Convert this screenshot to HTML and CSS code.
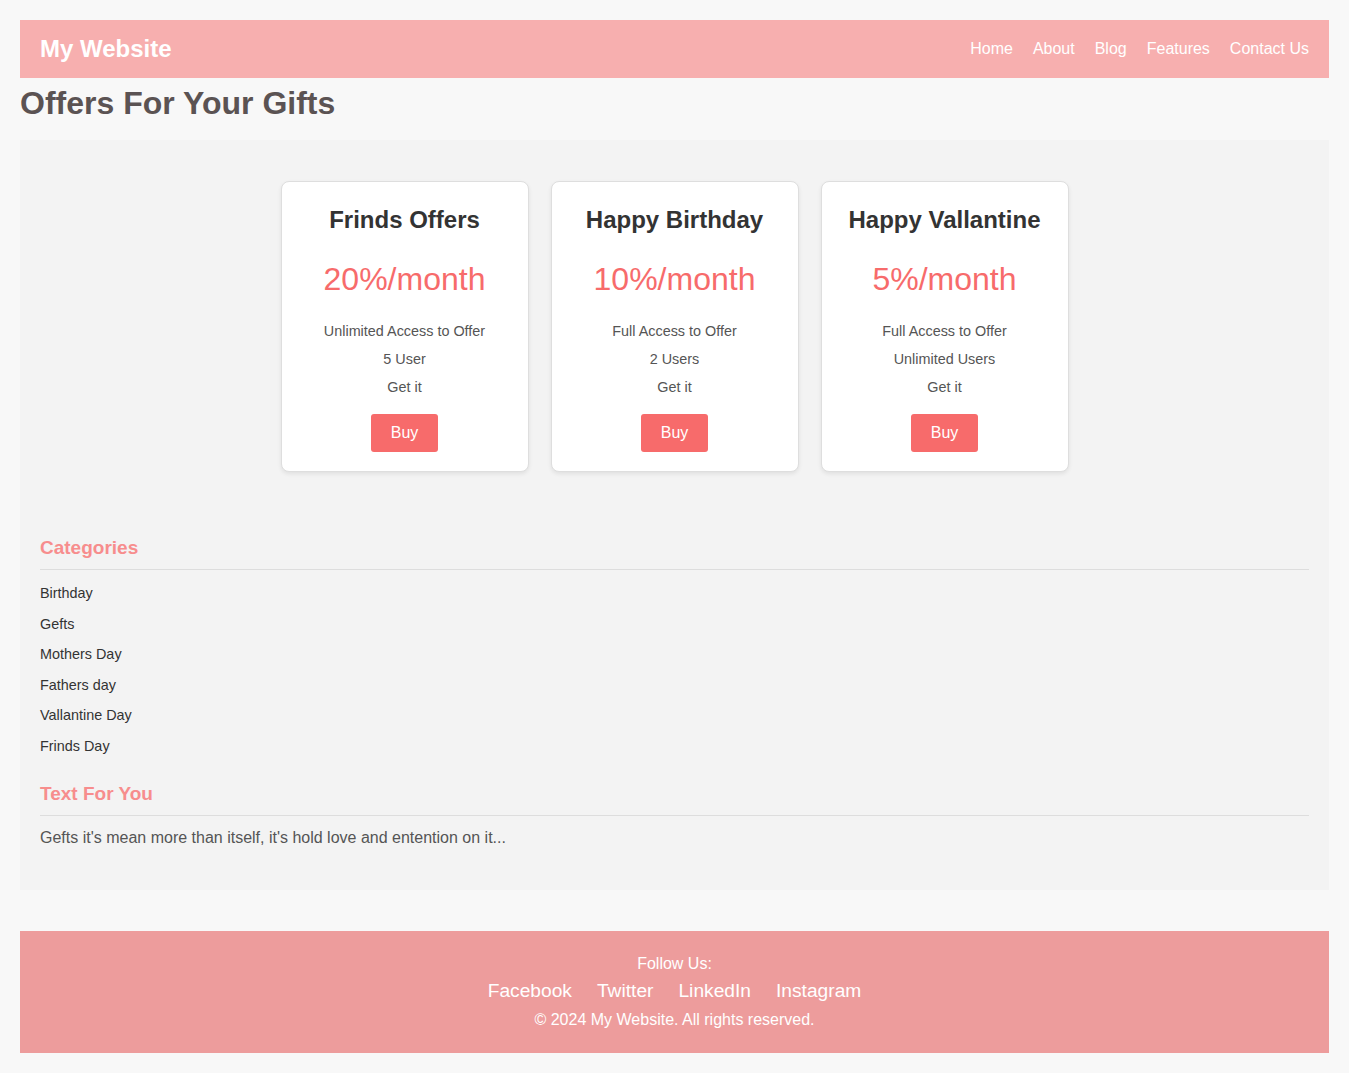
FILE: index.html
```html
<!DOCTYPE html>
<html lang="en">
<head>
<meta charset="utf-8">
<title>My Website</title>
<link rel="stylesheet" href="styles.css">
</head>
<body>
<header class="site-header">
  <div class="logo">My Website</div>
  <nav class="nav">
    <a href="#">Home</a>
    <a href="#">About</a>
    <a href="#">Blog</a>
    <a href="#">Features</a>
    <a href="#">Contact Us</a>
  </nav>
</header>

<h1 class="page-title">Offers For Your Gifts</h1>

<main class="content">
  <div class="cards">
    <div class="card">
      <h3 class="card-title">Frinds Offers</h3>
      <div class="price">20%/month</div>
      <ul class="features">
        <li>Unlimited Access to Offer</li>
        <li>5 User</li>
        <li>Get it</li>
      </ul>
      <button class="buy">Buy</button>
    </div>
    <div class="card">
      <h3 class="card-title">Happy Birthday</h3>
      <div class="price">10%/month</div>
      <ul class="features">
        <li>Full Access to Offer</li>
        <li>2 Users</li>
        <li>Get it</li>
      </ul>
      <button class="buy">Buy</button>
    </div>
    <div class="card">
      <h3 class="card-title">Happy Vallantine</h3>
      <div class="price">5%/month</div>
      <ul class="features">
        <li>Full Access to Offer</li>
        <li>Unlimited Users</li>
        <li>Get it</li>
      </ul>
      <button class="buy">Buy</button>
    </div>
  </div>

  <section class="block categories">
    <h2 class="block-title">Categories</h2>
    <ul class="cat-list">
      <li>Birthday</li>
      <li>Gefts</li>
      <li>Mothers Day</li>
      <li>Fathers day</li>
      <li>Vallantine Day</li>
      <li>Frinds Day</li>
    </ul>
  </section>

  <section class="block text-block">
    <h2 class="block-title">Text For You</h2>
    <p class="text">Gefts it's mean more than itself, it's hold love and entention on it...</p>
  </section>
</main>

<footer class="site-footer">
  <div class="follow">Follow Us:</div>
  <div class="social">
    <a href="#">Facebook</a>
    <a href="#">Twitter</a>
    <a href="#">LinkedIn</a>
    <a href="#">Instagram</a>
  </div>
  <div class="copy">© 2024 My Website. All rights reserved.</div>
</footer>
</body>
</html>
```

FILE: styles.css
```css
* { box-sizing: border-box; }

body {
  margin: 0;
  padding: 20px 20px 21px;
  background: #f8f8f8;
  font-family: "Liberation Sans", Arial, sans-serif;
  color: #333;
}

.site-header {
  height: 58px;
  background: #f7afaf;
  display: flex;
  align-items: center;
  justify-content: space-between;
  padding: 0 20px;
}

.logo {
  color: #fff;
  font-size: 24px;
  font-weight: 700;
}

.nav {
  display: flex;
  gap: 20px;
  margin-top: -1px;
}

.nav a {
  color: #fff;
  text-decoration: none;
  font-size: 16px;
}

.page-title {
  margin: 7px 0 0;
  height: 55px;
  font-size: 32px;
  font-weight: 700;
  color: #5b5353;
  line-height: 37px;
}

.content {
  background: #f3f3f3;
  padding: 41px 20px 43px;
}

.cards {
  display: flex;
  justify-content: center;
  gap: 22px;
}

.card {
  width: 248px;
  background: #fff;
  border: 1px solid #dedede;
  border-radius: 8px;
  box-shadow: 0 2px 4px rgba(0, 0, 0, 0.08);
  padding: 20px 20px 19px;
  text-align: center;
}

.card-title {
  margin: 4px 0 0;
  font-size: 24px;
  line-height: 28px;
  font-weight: 700;
  color: #333;
}

.price {
  margin-top: 27px;
  font-size: 32px;
  line-height: 37px;
  color: #f76b6b;
}

.features {
  list-style: none;
  margin: 19px 0 0;
  padding: 0;
  font-size: 14.4px;
  line-height: 28px;
  color: #555;
}

.buy {
  margin-top: 13px;
  height: 38px;
  padding: 0 20px;
  border: none;
  border-radius: 3px;
  background: #f76b6b;
  color: #fff;
  font-family: "Liberation Sans", Arial, sans-serif;
  font-size: 16px;
  cursor: pointer;
}

.block-title {
  margin: 0;
  font-size: 19px;
  line-height: 22px;
  font-weight: 700;
  color: #f78d8d;
  padding-bottom: 10px;
  border-bottom: 1px solid #ddd;
}

.categories {
  margin-top: 65px;
}

.cat-list {
  list-style: none;
  margin: 8px 0 0;
  padding: 0;
  font-size: 14.4px;
  line-height: 16.6px;
  color: #333;
}

.cat-list li {
  padding: 7px 0;
}

.text-block {
  margin-top: 21px;
}

.text {
  margin: 13px 0 0;
  font-size: 16px;
  line-height: 18.4px;
  color: #555;
}

.site-footer {
  margin-top: 41px;
  background: #ed9c9c;
  color: #fff;
  text-align: center;
  padding: 24px 0 23px;
}

.follow {
  font-size: 16px;
  line-height: 18.4px;
}

.social {
  display: flex;
  justify-content: center;
  gap: 25px;
  margin-top: 7px;
}

.social a {
  color: #fff;
  text-decoration: none;
  font-size: 19.2px;
  line-height: 22px;
}

.copy {
  margin-top: 9px;
  font-size: 16px;
  line-height: 18.4px;
}
```
